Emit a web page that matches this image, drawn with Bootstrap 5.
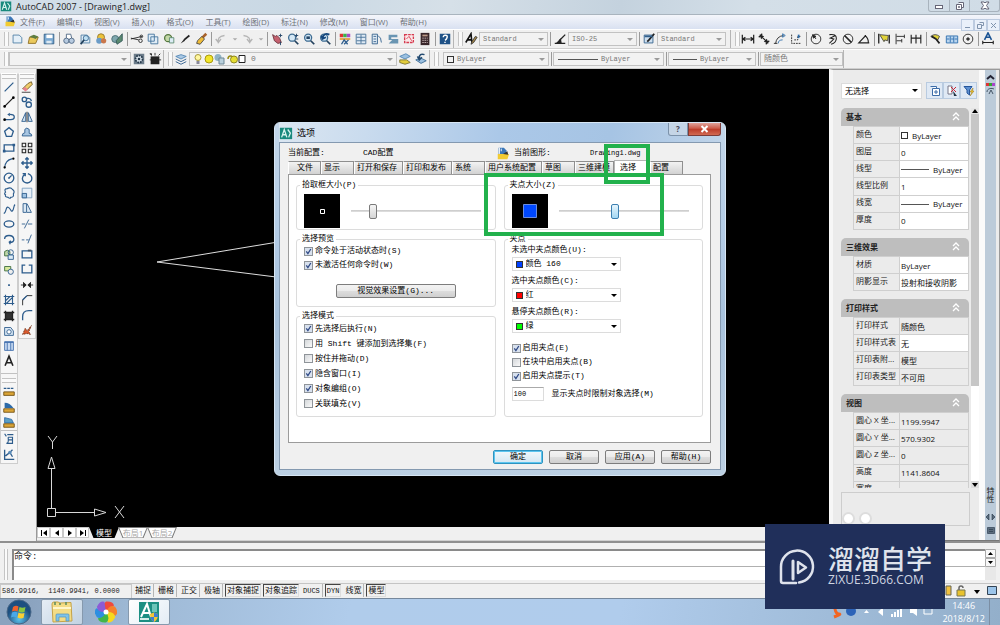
<!DOCTYPE html>
<html lang="zh-CN">
<head>
<meta charset="utf-8">
<meta name="viewport" content="width=device-width, initial-scale=1">
<title>AutoCAD 2007 - [Drawing1.dwg]</title>
<link href="https://cdn.jsdelivr.net/npm/bootstrap@5.3.0/dist/css/bootstrap.min.css" rel="stylesheet">
<style>
:root{--ui:"Open Sans","Noto Sans CJK SC",sans-serif;--mono:"Liberation Mono","Noto Sans CJK SC",monospace}
body{font:9px/12px var(--ui);color:#222;background:#f0f0f0}
button,select,input{font:inherit;color:inherit;line-height:inherit}
button{background:none;border:0;padding:0}
svg{display:block}
.mono8{font:8px/10px var(--mono)}
.mono7{font:7px/10px var(--mono)}

/* window chrome */
.titlebar{height:15px;background:linear-gradient(100deg,#d3dfe9,#c9d8e4 30%,#d6e0e8 45%,#c4d2de 62%,#d4dfe8 75%,#d0dce6);border-bottom:1px solid #a9b4be}
.titlebar h1{font:9px/14px var(--ui);margin:0;color:#222}
.wbtns{border:1px solid #a8b3bd;border-top:0;border-radius:0 0 3px 3px;height:12px}
.wbtns button{width:20px;display:grid;place-items:center}
.wbtns button+button{border-left:1px solid #a8b3bd}
.wbtns button:last-child{width:30px}
.menubar{height:14px;background:linear-gradient(#f4f6fb,#d9e1f1);font-size:8px;line-height:14px}
.menubar nav{gap:12px}
.menubar a{color:#6e7278;text-decoration:none}
.mdi button{width:13px;height:12px;border:1px solid #bccbe0;background:#e9f0fa;display:grid;place-items:center;color:#8094ae}

/* toolbars */
.tb{height:20px;overflow:hidden;background:#f0f0f0;border-top:1px solid #fff;border-bottom:1px solid #cfcfcf}
.bar{border-right:1px solid #b5b5b5;height:18px}
.grip{width:5px;height:14px;border:1px solid #c4c4c4;border-width:0 1px;background:#fafafa}
.ic{width:16px;height:16px;display:grid;place-items:center;flex:none}
.ic.slim{width:10px}
.bar-sep{width:1px;height:14px;background:#9a9a9a;margin:0 1px 0 2px;flex:none}
.combo{position:relative;border:1px solid #c2c2c2;background:#f2f2f2;height:14px;color:#777;flex:none}
.combo select{appearance:none;border:0;background:transparent;padding:0 10px 0 3px;outline:0;min-width:0;height:12px;flex:1}
.combo::after{content:"";position:absolute;right:3px;top:5px;border:3px solid transparent;border-top-color:#9a9a9a;border-bottom:0}
.combo.live{background:#fff;color:#000;border-color:#dcdcdc}
.combo.live::after{border-top-color:#000}
.w-std{width:69px}.w-proj{width:122px}.w-layer{width:208px}.w-color{width:106px}.w-type{width:111px}.w-wt{width:88px}.w-plot{width:83px}
.w-sel{width:81px;height:16px}
.ln{height:1px;background:#555;align-self:center;flex:none}

/* side tool strips */
.strip{width:18px;background:#f6f6f6;border:1px solid #cdcdcd;border-top-color:#fff}
.strip .ic{height:auto;flex:1 1 0;width:16px}
.hgrip{height:5px;width:14px;margin:0 1px;border:1px solid #c4c4c4;border-width:1px 0;background:#fafafa}
.draw{height:290px}.modify{height:259px}.order{height:47px}.ucs{height:32px}
.sheetarea{border-left:1px solid #999}
.board{background:#000;min-width:0}
.ucsicon{position:absolute;left:0;bottom:0}
.tabsrow{height:14px;border-bottom:1px solid #d0d0d0;font-size:8px;line-height:11px}
.tabsrow .nav1{width:13px;height:11px;background:#fff;border:1px solid #c9c9c9;display:grid;place-items:center}
.sheet{width:30px;height:11px;margin-right:-1px;color:#a8a8a8;background:#777;clip-path:polygon(0 0,100% 0,85% 100%,15% 100%)}
.sheet span{display:block;height:10px;line-height:10px;background:#fff;clip-path:polygon(4% 0,96% 0,82% 100%,18% 100%)}
.sheet.on{color:#fff;background:#000}.sheet.on span{background:#000}

/* properties palette */
.palette{width:171px;border:1px solid #9a9a9a;border-left:4px solid #f7f7f7;background:#ebebeb;border-bottom-color:#777;font-size:8px}
.pal-in{width:146px;padding:12px 0 0 8px}
.pal-btn{width:17px;height:17px;border:1px solid #b9cbe0;background:#dfe9f5;display:grid;place-items:center}
.props{height:380px;overflow:hidden;margin-top:9px}
.sec{width:128px;margin-bottom:8px}
.sec h2{font:bold 8px/17px var(--ui);height:18px;margin:0;padding:0 5px;background:#bebebe;border-radius:5px 5px 0 0}
.sec table{width:116px;margin-left:12px;table-layout:fixed;border-collapse:collapse;font-size:8px;line-height:12px}
.sec th,.sec td{border:1px solid #cfcfcf;padding:1px 1px 0;white-space:nowrap;overflow:hidden;font-weight:400;color:#222}
.sec th{width:46px;padding:0 0 3px 2px}
.sec td{background:#fff;color:#111}
.sec td.ro{background:#ebebeb}
.r6{height:104px}.r2{height:35px}.r4{height:69px}.r5{height:87px}
.vbar{width:8px;background:#fff}
.thumb{height:272px;background:#c6c6c6}
.desc{width:129px;height:34px;border:1px solid #cdcdcd;margin-top:4px;overflow:hidden}
.bubble{width:13px;height:13px;border:2px solid #ddd;border-radius:50%;background:#fff}
.rail{width:11px;background:#bccbd9;margin-right:3px}
.rail b{writing-mode:vertical-rl;font:8px/11px var(--ui)}
.edge{background:#fafafa}

/* command line, status, taskbar */
.cmd{height:42px;border-top:2px solid #8f8f8f;padding:6px 4px 3px 4px}
.cmd .grip{width:4px}
.cmdbox{border:1px solid #8a8a8a;border-width:2px 0 0 2px;background:#fff;font:9px/12px var(--mono)}
.cmdbox input{border:0;border-top:1px solid #b0b0b0;outline:0;height:14px;width:100%;padding:0}
.cmdbox p{height:15px;margin:0}
.status{height:15px;border-top:1px solid #c4c4c4;background:#f0f0f0}
.coord{width:132px;border:1px solid #c9c9c9;padding-left:1px;line-height:13px;white-space:pre}
.tog{border-right:1px solid #b5b5b5;height:13px;padding:0 2px;margin:0 1px;color:#111;line-height:12px}
.tog.on{border:1px solid #444;border-right-color:#ddd;border-bottom-color:#ddd;padding:0 1px}
.taskbar{height:27px;background:linear-gradient(100deg,#8ba3bf,#8ba3bf 3%,#9db8d4 13%,#b0cceb 35%,#b0ccec 62%,#a6c2e0 75%,#93afca);border-top:1px solid #76889c}
.task{width:42px;height:26px;border:1px solid #8699ad;border-radius:2px;background:linear-gradient(135deg,#e5edf5,#c2d2e2);display:grid;place-items:center}
.task.act{background:linear-gradient(135deg,#fff,#e3ecf5)}
.plain{width:37px;height:26px;display:grid;place-items:center}
.clock{color:#fff;text-align:center;font:9px/13px var(--ui)}
.peek{width:11px;border-left:1px solid #7b8ea3}

/* options dialog */
.dlg{position:absolute;left:50%;top:122px;width:452px;transform:translateX(-50%);border:1px solid #d7e6f4;border-radius:6px;background:linear-gradient(#c3d6e9,#b3cce6 30%,#a7c1dc 55%,#bcd0e3);padding:0 4px 5px;color:#000}
.dlg-title{height:19px;font-size:9px;background:linear-gradient(100deg,#dbe6f1,#c9dbee 20%,#abc8e8 50%,#a6c4e4 75%,#bfd3e8)}
.dlg-title button{height:13px;display:grid;place-items:center;border:1px solid #7c92aa;border-top:0;font:bold 8px/10px var(--ui);background:#c5d5e6;color:#445}
.dlg-title .q{width:20px;border-radius:0 0 0 3px}
.dlg-title .x{width:33px;background:linear-gradient(#dfa199,#cb5a49 45%,#bb3a28 50%,#d26a52);color:#fff;border-color:#7d3c38;border-radius:0 0 3px 0}
.dlg-body{border:1px solid #8499b0;background:#f0f0f0;padding:0 9px 5px 8px}
.info{height:18px;padding-top:1px}
.i1{width:75px}.i2{width:133px}.i3{width:121px}
.dtabs button{height:13px;border:1px solid #8f8f8f;border-bottom:0;border-left-color:#fff;background:linear-gradient(#f3f3f3,#d2d2d2);white-space:nowrap;text-align:left;padding:0 0 0 2px;width:33px;overflow:hidden}
.dtabs .t5{width:49px}.dtabs .t6{width:57px}.dtabs .t4{width:39px}
.dtabs button.on{background:#fff;height:15px;margin:-1px 0 -1px;position:relative;width:36px;padding-left:5px;border-color:#b5b5b5}
.panel{border:1px solid #9b9b9b;background:#fff;height:269px;padding:5px 7px 0}
.box{border:1px solid #dcdcdc;border-radius:3px;padding:0 7px;margin:0;min-width:0}
.box legend{float:none;width:auto;font:8px/10px var(--mono);padding:0 2px;margin:0 0 0 -4px}
.h1r{height:50px}.h2l{height:73px}.h2r{height:183px}
.prev{width:36px;height:34px;background:#000;display:grid;place-items:center}
.slide{appearance:none;width:130px;height:16px;background:linear-gradient(#c8c8c8,#e2e2e2) center/100% 2px no-repeat;margin:0 0 0 11px}
.slide::-webkit-slider-thumb{appearance:none;width:8px;height:15px;border:1px solid #7a7a7a;border-radius:2px;background:linear-gradient(#f5f5f5,#d5d5d5)}
.slide.blue::-webkit-slider-thumb{border-color:#3c7fb1;background:linear-gradient(#e6f5fd,#a3d7f3)}
.chk{display:flex;align-items:center;gap:2px;height:15px}
.chk.low{height:14px}
.chk input{appearance:none;width:9px;height:9px;margin:0;border:1px solid #8f9499;background:linear-gradient(135deg,#d4d7da,#fafafa);flex:none}
.chk input:checked{background:url("data:image/svg+xml,%3Csvg xmlns='http://www.w3.org/2000/svg' viewBox='0 0 7 7'%3E%3Cpath d='M1.3 3.4 2.9 5.6 5.8 1' fill='none' stroke='%23304a86' stroke-width='1.3'/%3E%3C/svg%3E") #d8e1ee}
.pb{border:1px solid #7d7d7d;border-radius:2px;background:linear-gradient(#f3f3f3,#ebebeb 48%,#dddddd 52%,#cfcfcf);height:14px;width:50px;line-height:12px}
.pb.wide{width:120px}
.pb.def{border:1px solid #2e93c0;box-shadow:inset 0 0 0 1px #5cc5ef;background:linear-gradient(#f0f8fc,#d5e7f2)}
.acts{gap:6px;margin-top:7px}
.lab{height:13px;line-height:12px;display:block}
.w-grip{width:109px}
.sw{width:7px;height:7px;border:1px solid #333;margin-left:3px;align-self:center;flex:none}
.sw.blue{background:#0040ff}.sw.red{background:#f00}.sw.green{background:#0f0}
.num{width:32px;height:14px;border:1px solid #dcdcdc;padding:0 1px;border-top-color:#aaa}
.hl{position:absolute;border:4px solid #22b14c}
.hl.a{left:329px;top:21px;width:46px;height:40px}
.hl.b{left:209px;top:50px;width:180px;height:63px}

/* site mark over the corner */
.sitemark{position:absolute;right:55px;bottom:16px;width:180px;height:85px;background:#202f5a;color:#dfe3ec;padding-left:14px}
.sitemark strong{font:500 26px/28px "Noto Sans CJK SC",sans-serif;margin-top:-4px}
.sitemark small{font:12px/12px "Open Sans",sans-serif;color:#cfd5e2;margin-top:2px}
</style>
</head>
<body class="d-flex flex-column vh-100 overflow-hidden position-relative">

<header>
  <div class="titlebar d-flex align-items-start">
    <span class="ms-0 me-1" data-art="cad"></span>
    <h1 class="flex-grow-1">AutoCAD 2007 - [Drawing1.dwg]</h1>
    <div class="wbtns d-flex me-0">
      <button aria-label="最小化"><svg width="10" height="8"><rect x="1.500" y="3.500" width="7" height="3" fill="#fff" stroke="#667"/></svg></button>
      <button aria-label="还原"><svg width="10" height="10"><path d="M3.500 1.500h5v5h-2M1.500 3.500h5v5h-5zM3.500 5.500h1v1h-1z" fill="#fff" stroke="#667"/></svg></button>
      <button aria-label="关闭"><svg width="10" height="9"><path d="M1 1h3l1 1 1-1h3L6.500 4.500 9 8H6L5 7 4 8H1l2.500-3.500z" fill="#fff" stroke="#667"/></svg></button>
    </div>
  </div>
  <div class="menubar d-flex">
    <span class="ms-1 me-1" data-art="dwg"></span>
    <nav class="d-flex flex-grow-1">
      <a href="#">文件(F)</a><a href="#">编辑(E)</a><a href="#">视图(V)</a><a href="#">插入(I)</a><a href="#">格式(O)</a><a href="#">工具(T)</a><a href="#">绘图(D)</a><a href="#">标注(N)</a><a href="#">修改(M)</a><a href="#">窗口(W)</a><a href="#">帮助(H)</a>
    </nav>
    <div class="mdi d-flex pt-1">
      <button aria-label="最小化文档"><svg width="7" height="7"><path d="M1 5.500h5" stroke="currentColor"/></svg></button>
      <button aria-label="还原文档"><svg width="7" height="7"><path d="M2.500.5h4v3h-2M.5 2.500h4v4h-4z" fill="none" stroke="currentColor"/></svg></button>
      <button aria-label="关闭文档"><svg width="7" height="7"><path d="M1 1l5 5M6 1 1 6" stroke="currentColor"/></svg></button>
    </div>
  </div>

  <div class="tb d-flex align-items-center">
    <div class="bar d-flex align-items-center ps-1 flex-shrink-0">
      <span class="grip me-0"></span>
      <span class="d-flex" data-icons="new open save | plot preview publish dwf | cut copy paste brush match | undo -down redo -down | pan zoomrt zoomwin zoomprev | props dc palettes sheets markup calc | help"></span>
    </div>
    <div class="bar d-flex align-items-center ps-1 flex-shrink-0 mono7">
      <span class="grip me-0"></span>
      <span class="d-flex" data-icons="tstyle"></span>
      <div class="combo w-std d-flex"><select aria-label="文字样式"><option>Standard</option></select></div>
      <span class="bar-sep"></span>
      <span class="d-flex" data-icons="dstyle"></span>
      <div class="combo w-std d-flex"><select aria-label="标注样式"><option>ISO-25</option></select></div>
      <span class="bar-sep"></span>
      <span class="d-flex" data-icons="tbstyle"></span>
      <div class="combo w-std d-flex me-1"><select aria-label="表格样式"><option>Standard</option></select></div>
    </div>
    <div class="d-flex align-items-center ps-1 flex-shrink-0">
      <span class="grip"></span>
      <span class="d-flex" data-icons="dlin dali darc dord | drad djog ddia dang | dq dbase dcont | dlead dtol dcen | dedit"></span>
    </div>
  </div>

  <div class="tb d-flex align-items-center">
    <div class="bar d-flex align-items-center ps-1 flex-shrink-0">
      <span class="grip"></span>
      <div class="combo w-proj d-flex"><select aria-label="工作空间"><option></option></select></div>
      <span class="d-flex" data-icons="gear wsave"></span>
    </div>
    <div class="bar d-flex align-items-center ps-1 flex-shrink-0">
      <span class="grip"></span>
      <span class="d-flex" data-icons="layers"></span>
      <div class="combo w-layer d-flex align-items-center mono8">
        <svg width="58" height="12" viewBox="0 0 58 12"><circle cx="8" cy="4.500" r="3" fill="#fff7a0" stroke="#a99a3c"/><path d="M6.500 8h3v3h-3z" fill="#889"/><circle cx="19" cy="6" r="4" fill="#f2e529" stroke="#a99a10"/><circle cx="28" cy="4.500" r="3.500" fill="#8fb3c4"/><path d="M29 5h5v6h-5z" fill="#b9d0dc" stroke="#6d8796"/><path d="M38 6a2.500 3 0 0 1 5 0" fill="none" stroke="#998c15" stroke-width="1.500"/><circle cx="44" cy="6.500" r="3.500" fill="#e5dd32" stroke="#8e8620"/><path d="M49 2.500h6v7h-6z" fill="#fff" stroke="#222"/></svg>
        <select aria-label="图层"><option>0</option></select>
      </div>
      <span class="d-flex" data-icons="lcur lprev"></span>
    </div>
    <div class="bar d-flex align-items-center ps-1 flex-shrink-0 mono7">
      <span class="grip me-1"></span>
      <div class="combo w-color d-flex"><span class="sw"></span><select aria-label="颜色"><option>ByLayer</option></select></div>
      <span class="bar-sep"></span>
      <div class="combo w-type d-flex ps-1"><span class="ln" style="width:40px"></span><select aria-label="线型"><option>ByLayer</option></select></div>
      <span class="bar-sep"></span>
      <div class="combo w-wt d-flex ps-1"><span class="ln" style="width:24px"></span><select aria-label="线宽"><option>ByLayer</option></select></div>
      <span class="bar-sep"></span>
      <div class="combo w-plot d-flex mono8"><select aria-label="打印样式"><option>随颜色</option></select></div>
    </div>
  </div>
</header>

<main class="d-flex flex-grow-1" style="min-height:0">
  <aside class="d-flex align-items-start pt-1">
    <div class="strip d-flex flex-column align-items-start">
      <span class="hgrip"></span>
      <div class="draw d-flex flex-column" data-icons="line xline pline poly rect arc circle cloud spline ellipse earc insert block point hatch grad region table mtext"></div>
      <hr class="my-1 w-100"><span class="hgrip"></span>
      <div class="order d-flex flex-column" data-icons="dist area mass"></div>
      <hr class="my-0 w-100">
      <div class="ucs d-flex flex-column" data-icons="list locate"></div>
    </div>
    <div class="strip d-flex flex-column me-0">
      <span class="hgrip"></span>
      <div class="modify d-flex flex-column" data-icons="erase copyobj mirror offset array move rotate scale stretch trim extend brk1 brk join chamfer fillet explode"></div>
    </div>
  </aside>

  <section class="sheetarea d-flex flex-column flex-grow-1" style="min-width:0">
    <div class="board flex-grow-1 position-relative mt-0">
      <svg width="100%" height="100%" fill="none" stroke="#ddd"><path d="M247 172 120 193l127 16"/></svg>
      <svg class="ucsicon" width="100" height="100" fill="none" stroke="#d8d8d8"><path d="M10.500 81.500h8v8h-8zM14.500 81V41M11 41.500h7L14.500 30zM19 85.500h38M57.500 82v7L69 85.500z"/><path d="M11 9l4.500 6L20 9M15.500 15v7M78 79l9 12M87 79l-9 12"/></svg>
    </div>
    <div class="tabsrow d-flex align-items-start">
      <button class="nav1" aria-label="第一个"><svg width="8" height="8"><path d="M1 1h1v6H1zM7 1v6L3 4z"/></svg></button>
      <button class="nav1" aria-label="上一个"><svg width="8" height="8"><path d="M6 1v6L2 4z"/></svg></button>
      <button class="nav1" aria-label="下一个"><svg width="8" height="8"><path d="M2 1v6l4-3z"/></svg></button>
      <button class="nav1" aria-label="最后一个"><svg width="8" height="8"><path d="M6 1h1v6H6zM1 1v6l4-3z"/></svg></button>
      <button class="sheet on"><span>模型</span></button><button class="sheet"><span>布局1</span></button><button class="sheet"><span>布局2</span></button>
    </div>
  </section>

  <aside class="palette d-flex flex-shrink-0">
    <div class="pal-in">
      <div class="d-flex align-items-center">
        <div class="combo live w-sel d-flex me-1"><select aria-label="选择集" class="h-100"><option>无选择</option></select></div>
        <button class="pal-btn" aria-label="切换"><svg width="12" height="12"><path d="M1.500 1.500h6v2M3.500 3.500h7v7h-7zM7 5v4M5 7h4" fill="#fff" stroke="#3d6da8"/></svg></button>
        <button class="pal-btn" aria-label="选择对象"><svg width="12" height="12"><path d="M2 1h4v8H2z" fill="#fff" stroke="#778"/><path d="M5 2l5 5M10 2 5 7" stroke="#c23"/><path d="M7 6l4 5H8z" fill="#234"/></svg></button>
        <button class="pal-btn" aria-label="快速选择"><svg width="12" height="12"><path d="M1 1.500h8L6.500 5v5L4 8V5z" fill="#5c8fd0" stroke="#24559b"/><path d="M10 3 7 7h2l-2 4 4-5H9.500z" fill="#f0c52a" stroke="#97751a" stroke-width=".5"/></svg></button>
      </div>
      <div class="d-flex props justify-content-between">
        <div>
          <div class="sec"><h2 class="d-flex justify-content-between"><span>基本</span><span data-art="fold"></span></h2>
            <table class="r6">
              <tr><th>颜色</th><td><span class="d-flex"><i class="sw me-1 ms-0"></i>ByLayer</span></td></tr>
              <tr><th>图层</th><td>0</td></tr>
              <tr><th>线型</th><td><span class="d-flex"><i class="ln me-1" style="width:28px"></i>ByLayer</span></td></tr>
              <tr><th>线型比例</th><td>1</td></tr>
              <tr><th>线宽</th><td><span class="d-flex"><i class="ln me-1" style="width:28px"></i>ByLayer</span></td></tr>
              <tr><th>厚度</th><td>0</td></tr>
            </table></div>
          <div class="sec"><h2 class="d-flex justify-content-between"><span>三维效果</span><span data-art="fold"></span></h2>
            <table class="r2">
              <tr><th>材质</th><td>ByLayer</td></tr>
              <tr><th>阴影显示</th><td>投射和接收阴影</td></tr>
            </table></div>
          <div class="sec"><h2 class="d-flex justify-content-between"><span>打印样式</span><span data-art="fold"></span></h2>
            <table class="r4">
              <tr><th>打印样式</th><td class="ro">随颜色</td></tr>
              <tr><th>打印样式表</th><td>无</td></tr>
              <tr><th>打印表附...</th><td class="ro">模型</td></tr>
              <tr><th>打印表类型</th><td class="ro">不可用</td></tr>
            </table></div>
          <div class="sec"><h2 class="d-flex justify-content-between"><span>视图</span><span data-art="fold"></span></h2>
            <table class="r5">
              <tr><th>圆心 X 坐...</th><td class="ro">1199.9947</td></tr>
              <tr><th>圆心 Y 坐...</th><td class="ro">570.9302</td></tr>
              <tr><th>圆心 Z 坐...</th><td class="ro">0</td></tr>
              <tr><th>高度</th><td class="ro">1141.8604</td></tr>
              <tr><th>宽度</th><td class="ro">2399.9993</td></tr>
            </table></div>
        </div>
        <div class="vbar d-flex flex-column">
          <svg width="8" height="6"><rect width="8" height="6" fill="#e6e6e6"/><path d="M1 5h6L4 1z"/></svg>
          <div class="thumb"></div>
          <svg class="mt-auto" width="8" height="7"><rect width="8" height="7" fill="#ddd"/><path d="M1 2h6L4 6z"/></svg>
        </div>
      </div>
      <div class="desc d-flex align-items-end gap-1 pt-4"><i class="bubble"></i><i class="bubble"></i></div>
    </div>
    <div class="edge flex-grow-1"></div>
    <div class="rail d-flex flex-column align-items-center">
      <svg width="11" height="24" class="mt-1"><path d="M2 5l3.500-3L9 5" stroke="#223" fill="none" stroke-width="2"/><path d="M1 9h3v3H1z" fill="#d33"/><path d="M4 9h3v3H4z" fill="#3a3"/><path d="M7 9h3v3H7z" fill="#a4c"/><path d="M2 18c0-4 5-4 7-3M4 20l2-4 2 4" stroke="#456" fill="none"/></svg>
      <b class="mt-auto">特性</b>
      <svg width="11" height="37"><path d="M1 14l3-3v6zM10 14l-3-3v6zM2.500 24.500h7v6h-7z M4 26.500h4M4 28.500h4" fill="#345" fill-opacity=".7" stroke="#234" stroke-width=".6"/></svg>
    </div>
  </aside>
</main>

<section class="cmd d-flex">
  <span class="grip me-1 h-100"></span>
  <div class="cmdbox flex-grow-1 ms-0">
    <p>命令:</p>
    <input aria-label="命令行">
  </div>
  <svg width="11" height="31"><path d="M0 0h11v31H0z" fill="#e8e8e8"/><path d="M.5.5h10v8H.5z M.5 9.500h10v8H.5z" fill="#f8f8f8" stroke="#aaa"/><path d="M3 6h5L5.500 3zM3 12h5l-2.500 3z"/></svg>
</section>

<section class="status d-flex align-items-start mono8">
  <span class="coord mono7">586.9916,  1140.9941, 0.0000</span>
  <button class="tog">捕捉</button><button class="tog">栅格</button><button class="tog">正交</button><button class="tog">极轴</button><button class="tog on">对象捕捉</button><button class="tog on">对象追踪</button><button class="tog mono7">DUCS</button><button class="tog on mono7">DYN</button><button class="tog">线宽</button><button class="tog on">模型</button>
  <svg class="ms-auto" width="56" height="14"><path d="M2 2h5v9H2z" fill="#f0c040" stroke="#665"/><path d="M13 6h8v6h-8z" fill="#e8c22e" stroke="#775"/><path d="M15 6V4a2 2 0 0 1 4 0" fill="none" stroke="#666" stroke-width="1.500"/><path d="M30 6h6l-3 4z"/><path d="M43.500 2.500h9v8h-9z" fill="#9cc5ea" stroke="#345"/></svg>
</section>

<footer class="taskbar d-flex align-items-center">
  <button class="plain" aria-label="开始"><svg width="26" height="26" viewBox="0 0 26 26"><defs><radialGradient id="orb" cy=".8"><stop stop-color="#5cc3ec"/><stop offset="1" stop-color="#1d4f80"/></radialGradient></defs><circle cx="13" cy="13" r="12" fill="url(#orb)" stroke="#4a6787"/><path d="M7 8q3-2 5.500-.5l-1 5Q9 11 6 12.500z" fill="#f0622c"/><path d="M13.500 8q3 1.500 6 0l-1 5q-3 1-6-.5z" fill="#8cc63e"/><path d="M6 13.500q3-1.500 5.500 0l-1 5Q8 17 5 18.500z" fill="#4aa8e8"/><path d="M12.500 13.500q3 1.500 6 .5l-1 5q-3 1-6-.5z" fill="#fbd033"/></svg></button>
  <button class="task ms-1" aria-label="资源管理器"><svg width="24" height="22"><path d="M2 3q0-2 2-2h4l2 1 11-.5 1 18.500-19 1z" fill="#f3dc86" stroke="#c5a348"/><path d="M5 1v3M10 2v2M16 1v3" stroke="#5a8a5c" stroke-width="1.500"/><path d="M3 7h18" stroke="#fff6cc" stroke-width="2"/><path d="M6 20v-6q0-1 1-1h11q1 0 1 1v6h-3v-4H9v4z" fill="#7ec3ea" stroke="#5192bc" stroke-width=".7"/></svg></button>
  <button class="plain mx-1" aria-label="浏览器"><svg width="22" height="22" viewBox="-11 -11 22 22"><path d="M0 0Q-5-7 0-10.500 7-11 8-6.500z" fill="#f04a3c" id="petal"/><path d="M0 0Q-5-7 0-10.500 7-11 8-6.500z" fill="#f5822c" transform="rotate(60)"/><path d="M0 0Q-5-7 0-10.500 7-11 8-6.500z" fill="#f6d91f" transform="rotate(120)"/><path d="M0 0Q-5-7 0-10.500 7-11 8-6.500z" fill="#42b649" transform="rotate(180)"/><path d="M0 0Q-5-7 0-10.500 7-11 8-6.500z" fill="#2d8fe0" transform="rotate(240)"/><path d="M0 0Q-5-7 0-10.500 7-11 8-6.500z" fill="#8b5bd6" transform="rotate(300)"/><circle r="2.500" fill="#fff"/></svg></button>
  <button class="task act" aria-label="AutoCAD"><svg width="22" height="20"><path d="M1 0h20v20H1z" fill="#1c8f83"/><path d="M3 15 9 2l4 13M5 11h6" fill="none" stroke="#fff" stroke-width="2"/><path d="M14 2h5v8h-5z" fill="#6dc5b9"/><path d="M2 17h9" stroke="#d5eee9" stroke-width="2"/><path d="M12 12l4-1.500 4 1.500q0 6-4 8-4-2-4-8z" fill="#f3c437"/><path d="M16 10.500 20 12v3h-4zM12 15h4v5q-3-1.500-4-5z" fill="#3d7fd0"/></svg></button>
  <div class="ms-auto d-flex align-items-center h-100">
    <svg class="me-0" width="110" height="16"><path d="M9 2Q2 0 3 5t4 5-5 3" fill="none" stroke="#f26522" stroke-width="3"/><circle cx="19" cy="7" r="5" fill="#2c63b8"/><path d="M32 9h5l-2.500-3zM46 8l5-5v9z" fill="#fff"/><path d="M60 13V10M63 13V8M66 13V6M69 13V4" stroke="#fff" stroke-width="2"/><path d="M78 5h3l4-3v10l-4-3h-3z" fill="#fff"/><path d="M92 4h8v6h-8z" fill="none" stroke="#fff"/></svg>
    <div class="clock me-1"><div>14:46</div><div>2018/8/12</div></div>
    <span class="peek h-100"></span>
  </div>
</footer>

<section class="dlg" role="dialog" aria-label="选项">
  <div class="dlg-title d-flex align-items-center">
    <span class="ms-0 me-1" data-art="cad"></span><span class="flex-grow-1">选项</span>
    <div class="d-flex align-self-start"><button class="q" aria-label="帮助">?</button><button class="x" aria-label="关闭"><svg width="9" height="8"><path d="M1.500 1l6 6M7.500 1l-6 6" stroke="#fff" stroke-width="2"/></svg></button></div>
  </div>
  <div class="dlg-body mono8">
    <div class="info d-flex align-items-center">
      <span class="i1">当前配置:</span><span class="i2">CAD配置</span>
      <span class="me-1" data-art="dwg"></span><span class="flex-grow-1">当前图形:</span><span class="i3 mono7">Drawing1.dwg</span>
    </div>
    <div class="dtabs d-flex align-items-start ms-0">
      <button class="ps-2">文件</button><button>显示</button><button class="t5">打开和保存</button><button class="t5">打印和发布</button><button>系统</button><button class="t6">用户系统配置</button><button>草图</button><button class="t4">三维建模</button><button class="on">选择</button><button>配置</button>
    </div>
    <div class="panel">
      <div class="d-flex gap-2 align-items-stretch">
        <div class="d-flex flex-column w-50">
          <fieldset class="box h1r"><legend>拾取框大小(P)</legend>
            <div class="d-flex align-items-center pt-1"><span class="prev"><svg width="5" height="5"><path d="M.5.5h4v4h-4z" fill="none" stroke="#fff"/></svg></span><input class="slide" type="range" min="0" max="100" value="15" aria-label="拾取框大小"></div></fieldset>
          <fieldset class="box mt-1 h2l"><legend>选择预览</legend>
            <label class="chk low"><input type="checkbox" checked>命令处于活动状态时(S)</label>
            <label class="chk low"><input type="checkbox" checked>未激活任何命令时(W)</label>
            <div class="text-center mt-2 pt-1"><button class="pb wide">视觉效果设置(G)...</button></div></fieldset>
          <fieldset class="box mt-1 flex-grow-1"><legend>选择模式</legend>
            <label class="chk"><input type="checkbox" checked>先选择后执行(N)</label>
            <label class="chk"><input type="checkbox">用 Shift 键添加到选择集(F)</label>
            <label class="chk"><input type="checkbox">按住并拖动(D)</label>
            <label class="chk"><input type="checkbox" checked>隐含窗口(I)</label>
            <label class="chk"><input type="checkbox" checked>对象编组(O)</label>
            <label class="chk"><input type="checkbox">关联填充(V)</label></fieldset>
        </div>
        <div class="d-flex flex-column w-50">
          <fieldset class="box h1r"><legend>夹点大小(Z)</legend>
            <div class="d-flex align-items-center pt-1"><span class="prev"><svg width="14" height="14"><path d="M.5.5h13v13H.5z" fill="#0048ff" stroke="#6a8de0"/></svg></span><input class="slide blue" type="range" min="0" max="100" value="43" aria-label="夹点大小"></div></fieldset>
          <fieldset class="box mt-1 h2r"><legend>夹点</legend>
            <label class="lab" for="g1">未选中夹点颜色(U):</label>
            <div class="combo live w-grip d-flex"><span class="sw blue"></span><select id="g1"><option>颜色 160</option></select></div>
            <label class="lab mt-1" for="g2">选中夹点颜色(C):</label>
            <div class="combo live w-grip d-flex"><span class="sw red"></span><select id="g2"><option>红</option></select></div>
            <label class="lab mt-1" for="g3">悬停夹点颜色(R):</label>
            <div class="combo live w-grip d-flex mb-1"><span class="sw green"></span><select id="g3"><option>绿</option></select></div>
            <label class="chk low mt-2"><input type="checkbox" checked>启用夹点(E)</label>
            <label class="chk low"><input type="checkbox">在块中启用夹点(B)</label>
            <label class="chk low"><input type="checkbox" checked>启用夹点提示(T)</label>
            <div class="d-flex align-items-center gap-2 mt-1"><input class="num mono7" id="lim" value="100"><label for="lim">显示夹点时限制对象选择(M)</label></div></fieldset>
        </div>
      </div>
    </div>
    <div class="acts d-flex justify-content-end"><button class="pb def">确定</button><button class="pb">取消</button><button class="pb">应用(A)</button><button class="pb">帮助(H)</button></div>
  </div>
  <span class="hl a"></span><span class="hl b"></span>
</section>

<div class="sitemark d-flex align-items-center">
  <svg width="37" height="38" viewBox="0 0 37 38" fill="none" stroke="#dfe3ec" stroke-width="2.500" stroke-linecap="round" stroke-linejoin="round"><path d="M17 35H4Q2 35 2 33V19A16 16 0 1 1 20 34.500"/><path d="M14 13v18" stroke-width="3"/><path d="M19 14v11l8-5.500z"/></svg>
  <div class="d-flex flex-column ms-2 ps-1"><strong>溜溜自学</strong><small>ZIXUE.3D66.COM</small></div>
</div>

<script>
// Icon drawings on a 16-unit grid; k = dark stroke, b = blue stroke, t = thick blue stroke
const k='fill="none" stroke="#222"', b='fill="none" stroke="#2d5c8c"', t='fill="none" stroke="#2d5c8c" stroke-width="1.500"';
const page='<path d="M3.500 3.500h7l3 3v6h-10z" fill="#e4eff8" stroke="#4f7fa5"/>';
const lens='<circle cx="7" cy="6.500" r="4" fill="#d5e8f5" stroke="#3e6c92" stroke-width="1.500"/><path d="M10 10l4 4" stroke="#24425e" stroke-width="2"/>';
const art={
cad:'<path d="M1 2h14v13H1z" fill="#19897d"/><path d="M3 13 6 4l3 9M4 10h4M10 4l3 4-2 5" fill="none" stroke="#d8f2ee" stroke-width="1.500"/>',
dwg:'<path d="M3 2h6l3 3v6H3z" fill="#3c77b8"/><path d="M4 2v7M6 3v3" stroke="#fff"/><path d="M2 9h13l-2 6H2z" fill="#f1cb33"/><path d="M8 9l5-3 1 4z" fill="#333"/>',
fold:'<path d="M5 8l3-3 3 3M5 12l3-3 3 3" fill="none" stroke="#fff" stroke-width="1.300"/>',
new:page,open:'<path d="M2.500 13 4 6h10l-3 7z" fill="#eac95c" stroke="#8c6d23"/><path d="M4 5 9 3l5 2-3 3z" fill="#5e7d3f"/>',
save:'<path d="M2.500 2.500h11v11h-11z" fill="#7aa9d2" stroke="#2f5b85"/><path d="M5 3h7v4H5z" fill="#fff"/><path d="M5 10h6v3H5z" fill="#dce8f2"/>',
plot:'<path d="M5 7V2.500h5L11 7" fill="#fff" stroke="#4a6480"/><circle cx="5" cy="10" r="3" fill="#b8cbe0" stroke="#4a6480"/><circle cx="11" cy="10" r="3" fill="#b8cbe0" stroke="#4a6480"/>',
preview:page+'<circle cx="9" cy="7" r="3" fill="#bfe0f3" stroke="#3e6c92"/><path d="M7 9l-4 5" stroke="#24425e" stroke-width="2"/>',
publish:'<circle cx="8" cy="6" r="4" fill="#edc43a" stroke="#91742a"/><circle cx="6" cy="10" r="3.500" fill="#6b9cc7"/><circle cx="11" cy="10" r="3" fill="#ca784c"/>',
dwf:'<circle cx="6" cy="8" r="4" fill="#7fa7ad" stroke="#45696f"/><path d="M14 2v8l-6 4-1-4z" fill="#5b8a70" stroke="#35585a"/>',
cut:'<path d="M1 8l13-3M1 7l9 2" '+k+'/><circle cx="12" cy="10" r="2" '+k+'/><circle cx="13" cy="5" r="1.500" '+k+'/>',
copy:'<path d="M2.500 2.500h7v8h-7zM5.500 5.500h8v8h-8z" fill="#e0edf7" stroke="#41719a"/>',
paste:'<circle cx="7" cy="7" r="4" fill="#c5d9a8" stroke="#55773d" stroke-width="1.500"/><path d="M8.500 6.500h5v6h-5z" fill="#dcecf5" stroke="#5b8a6e"/>',
brush:'<path d="M13 4 7 9" stroke="#222" stroke-width="2"/><path d="M7 8 3 13l5-3z" fill="#222"/>',
match:'<path d="M14 2 9 7" stroke="#a8612a" stroke-width="3"/><path d="M9 5l3 3-5 6-4-1 1-3z" fill="#f0bc38" stroke="#444"/>',
undo:'<path d="M5 13Q3 5 12 4M2 8l3 4 3-4" fill="none" stroke="#b5b5b5" stroke-width="1.500"/>',
redo:'<path d="M11 13Q13 5 4 4M8 8l3 4 3-4" fill="none" stroke="#b5b5b5" stroke-width="1.500"/>',
down:'<path d="M5 7h6l-3 3z" fill="#aaa"/>',
pan:'<path d="M3 3l3 2 2-1 3 3 2 5-4 1-4-3z" fill="#c4606e" stroke="#69323c"/><path d="M12 2v4M10 4h4M12 11v4" stroke="#246"/>',
zoomrt:lens+'<path d="M12 2v4M10 4h4M11 8h3" stroke="#246"/>',zoomwin:lens+'<path d="M5 5h4v3H5z" fill="#246"/>',
zoomprev:lens+'<path d="M13 3q-6-3-8 4M4 4l1 4 4-2" fill="none" stroke="#14467c" stroke-width="2"/>',
props:'<path d="M2 2h4v4H2z" fill="#d33"/><path d="M6 2h4v4H6z" fill="#39b54a"/><path d="M10 2h4v4h-4z" fill="#a44bc9"/><path d="M2 7h12v2H2z" fill="#e3a03a"/><path d="M4 14l3-5 4 5M12 9l-5 5" '+b+' stroke-width="1.500"/>',
dc:'<path d="M2.500 2.500h11v11h-11zM8 3v10M3 6h10M3 10h10" fill="#dfeaf4" stroke="#446e95"/>',
palettes:'<path d="M2.500 2.500h6v11h-6zM9 4q4 2 4 8M4 5h3M4 8h3M4 11h3" fill="#dfeaf4" stroke="#33608c"/>',
sheets:'<path d="M3 3h10v3H6v2h8v5H3l4-4H3z" fill="#6a95b2"/>',
markup:'<path d="M3 3h10v9H3z" fill="#fbe8e8" stroke="#d63c50" stroke-dasharray="3 1" stroke-width="1.500"/><path d="M5 8l3-3 3 5" fill="none" stroke="#d63c50"/>',
calc:'<path d="M3 1h10v14H3z" fill="#39262a"/><path d="M5 3h6v2H5z" fill="#b98"/><path d="M5 7h6M5 9.500h6M5 12h6" stroke="#e6d4d4" stroke-dasharray="1.500 1"/>',
help:'<path d="M2 2h12v12H2z" fill="#1f5287"/><path d="M6 6q0-2.500 2.500-2.300T10.500 6 8 9.500M8 11v1.500" fill="none" stroke="#fff" stroke-width="1.600"/>',
tstyle:'<path d="M2 12 8 2l1 10M4 9h5" fill="none" stroke="#111" stroke-width="1.800"/><path d="M15 6l-4 6-3 2 1-3 4-6z" fill="#a98b4a" stroke="#333"/>',
dstyle:'<path d="M2 13h12M14 3 7 10" stroke="#222" stroke-width="1.500"/><path d="M9 7l-6 6h7z" fill="#222"/>',
tbstyle:'<path d="M2.500 3.500h10v9h-10z" fill="#cfe0f0" stroke="#33608c"/><path d="M14 2 8 9l-2 2" stroke="#222" stroke-width="2"/><path d="M3 5h9" stroke="#33608c" stroke-width="2"/>',
dlin:'<path d="M1.500 3v10M14.500 3v10M2 8h12M5 6 2 8l3 2M11 6l3 2-3 2" '+k+' stroke-width="1.400"/>',
dali:'<path d="M2 6l4-4M10 14l4-4M4 4l8 8M4 4l1 3 2-2zM12 12l-1-3-2 2z" fill="#222" stroke="#222" stroke-width="1.300"/>',
darc:'<path d="M3 13Q4 5 12 4M1 13h4" '+k+'/><path d="M6 13q0-4 5-4M11 2l3 2-3 2z" fill="none" stroke="#2c6dac"/>',
dord:'<path d="M3 3v10h10M6 9h4V5h4" '+k+' stroke-dasharray="2 1"/><path d="M11 3v4" stroke="#2c6dac" stroke-width="2"/>',
drad:'<circle cx="8" cy="8" r="5.500" '+k+'/><path d="M8 8 5 4M4 3l4 2-3 2z" fill="#222" stroke="#222"/>',
djog:'<path d="M5 3q8-1 8 4t-6 7M5 13l5-5-4-1 6-3" '+k+' stroke-width="1.200"/>',
ddia:'<circle cx="8" cy="8" r="5.500" '+k+'/><path d="M4 4l8 8" stroke="#222" stroke-width="2"/>',
dang:'<path d="M14 12.500H2L10 4M9 4q4 3 4 8" '+k+' stroke-width="1.300"/>',
dq:'<path d="M2 2v11M14 3v10" '+k+' stroke-width="1.500"/><path d="M3 3l10 1-1 6-3-1-1 2z" fill="#e2d43a" stroke="#444"/>',
dbase:'<path d="M3.500 2v12M4 5h9M4 10h6M13 3v4M10 8v4" '+k+'/>',
dcont:'<path d="M2.500 3v10M8 3v10M13.500 3v10M3 7h10" '+k+' stroke-width="1.300"/>',
dlead:'<path d="M2 5q5-4 10 0l-2 4-5-3z" fill="#e2d43a" stroke="#444"/><path d="M8 8l4 5M3 5l5 3" '+k+' stroke-width="2"/>',
dtol:'<path d="M1.500 4.500h13v8h-13zM6 5v7M10 5v7M2 8h3M7 8h3M11 8h3" fill="#b9d5ef" stroke="#2c6dac"/>',
dcen:'<circle cx="8" cy="8" r="5.500" '+k+'/><path d="M8 6v4M6 8h4" stroke="#222" stroke-width="1.500"/>',
dedit:'<path d="M4 9l4-8 4 8M6 6h4" fill="none" stroke="#1c5494" stroke-width="1.800"/><path d="M2 10v4M14 10v4M2 12h12" '+k+' stroke-width="1.300"/>',
gear:'<path d="M2 2h12v12H2z" fill="#6d7d8b"/><circle cx="8" cy="8" r="4" fill="#dce6ee" stroke="#26394a" stroke-dasharray="2 1" stroke-width="2"/><circle cx="8" cy="8" r="1.500" fill="#26394a"/>',
wsave:'<path d="M3 5h10v9H3z" fill="#222"/><path d="M2 2h2v2M8 1v3M14 2l-2 2M2 9h2M12 9h3" stroke="#222"/>',
layers:'<path d="M2 5l6-2 6 2-6 3z" fill="#a9c8e4" stroke="#4f83b3"/><path d="M2 8l6 3 6-3M2 11l6 3 6-3" '+b+'/>',
lcur:'<path d="M2 5l7-3 5 3-6 3z" fill="#9bc0e0" stroke="#4f83b3"/><path d="M2 9h8l4 3-6 2-6-2z" fill="#e3cd3c" stroke="#7c742f"/>',
lprev:'<path d="M2 9l6-2 6 3-6 3z" fill="#9bc0e0" stroke="#3c6a94"/><path d="M12 3q-6-2-6 4M4 5l2 4 3-3" fill="none" stroke="#234a70" stroke-width="1.800"/>',
line:'<path d="M3 13 13 3" '+t+'/>',xline:'<path d="M3 13 13 3" '+k+' stroke-width="1.500"/><circle cx="3" cy="13" r="1.500"/><circle cx="13" cy="3" r="1.500"/>',
pline:'<path d="M2 11h8q4 0 4-3t-5-3" '+t+'/><path d="M9 3v4L6 5z" fill="#2d5c8c"/><circle cx="3" cy="11" r="1.500"/>',poly:'<path d="M8 3l5 4-2 6H5L3 7z" '+t+'/>',
rect:'<path d="M2.500 4.500h11v7h-11z" '+t+'/><path d="M1 10h3v3H1zM12 3h3v3h-3z" fill="#2d5c8c"/>',
arc:'<path d="M3 14Q3 5 12 3" '+t+'/><circle cx="3" cy="13" r="1.300"/><circle cx="13" cy="3" r="1.300"/>',
circle:'<circle cx="8" cy="8" r="5.500" '+t+'/><path d="M8 8l3-3M7 8h2" '+t+'/>',
cloud:'<path d="M4 7Q2 3 6 3q4-2 6 1 3 2 1 5 1 4-3 4-1 2-3 0-4 0-3-3-2-1 0-3z" '+b+' stroke-width="1.300"/>',
spline:'<path d="M2 13C5 13 4 5 7 6s3 6 5 4 1-6 3-7" '+b+' stroke-width="1.300"/>',ellipse:'<ellipse cx="8" cy="8" rx="5.500" ry="3.500" '+t+'/>',
earc:'<path d="M3 8q0-4 5-4t5.500 4-5 4l1 2M8 12l2-2" '+t+'/>',
insert:'<path d="M3 4q3-3 6 0v5H3z" fill="#bfd7a8" stroke="#3b6b3b"/><circle cx="10" cy="5" r="3" fill="none" stroke="#2d5c8c"/><path d="M7 8h6v5H7z" fill="#dcebf6" stroke="#2d5c8c"/>',
block:'<path d="M3 4h7v5H3z" fill="#d8e99c" stroke="#3b6b3b"/><circle cx="10" cy="10" r="3" fill="#eee" stroke="#2d5c8c"/>',
point:'<path d="M7 7h2v2H7z" fill="#2d5c8c"/>',
hatch:'<path d="M4 2v12M12 2v12M2 4h12M2 12h12M4 9l5-5M5 12l7-7" '+b+' stroke-width="1.300"/>',
grad:'<path d="M4 4h8v8H4z" fill="#333"/><path d="M4 2v12M12 2v12M2 4h12M2 12h12" '+k+' stroke-width="1.500"/>',
region:'<path d="M3 4h7l3 4v5H3z" fill="#dce9f5" stroke="#2d5c8c"/><circle cx="8" cy="9" r="2.500" fill="#fff" stroke="#2d5c8c"/>',
table:'<path d="M3 3h10v10H3z" fill="#c9dbf2" stroke="#3f6dab"/><path d="M3 4h10M6 4v9M10 4v9" stroke="#3f6dab"/>',
mtext:'<path d="M3.500 13.500 8 2.500l4.500 11M5 10h6" fill="none" stroke="#222" stroke-width="1.800"/>',
dist:'<path d="M2 5h12" '+t+' stroke-dasharray="3 1"/><path d="M2 9h12v4H2z" fill="#dba536" stroke="#6f5013"/>',
area:'<path d="M3 3q6 0 10 6H3z" fill="#2d6aa8"/><path d="M2 10h12v4H2z" fill="#dba536" stroke="#6f5013"/>',
mass:'<path d="M3 3l8 2 2 4H3z" fill="#5a9fc4" stroke="#2d6aa8"/><path d="M2 10h12v4H2z" fill="#dba536" stroke="#6f5013"/>',
list:'<path d="M3 2l2 3M6 3h7M7 6h5v7H5q3 0 2-7M7 9h5" '+b+' stroke-width="1.300"/>',
locate:'<path d="M3 2v11h11M4 9l5-4 3 5M9 5l3-3" '+t+'/><circle cx="9" cy="5" r="2" fill="#5b8dbb"/>',
erase:'<path d="M3 10 9 4l4-2 1 3-6 6z" fill="#f0cd6a" stroke="#695520"/><path d="M3 10l3-2 3 3-3 2z" fill="#e87f8e"/><path d="M2 14h10" stroke="#333"/>',
copyobj:'<circle cx="5" cy="5" r="2.500" '+t+'/><circle cx="10" cy="11" r="3" '+t+'/><path d="M8 4q4-1 5 3" '+t+'/>',
mirror:'<path d="M6.500 3v10H2zM9.500 3v10H14z" fill="#d3e2ef" stroke="#2d5c8c"/><path d="M8 2v12" stroke="#222"/>',
offset:'<path d="M2.500 12.500h11q0-3-3-3V5q-3-3-5 0v4q-3 0-3 3.500z" fill="#a8c6e2" stroke="#2d5c8c"/>',
array:'<path d="M2.500 2.500h4v4h-4zM9.500 2.500h4v4h-4zM2.500 9.500h4v4h-4zM9.500 9.500h4v4h-4z" '+k+' stroke-width="1.200"/>',
move:'<path d="M8 2v12M2 8h12M6 4l2-2 2 2M6 12l2 2 2-2M4 6 2 8l2 2M12 6l2 2-2 2" '+t+'/>',
rotate:'<path d="M5 4q-4 4-1 8 5 4 9-1 2-6-4-8M3 3h3v3" '+t+'/>',
scale:'<path d="M2.500 2.500h11v11h-11z" fill="#e8f0f8" stroke="#7a9cbe"/><path d="M2.500 8.500h5v5h-5z" fill="#9fc3e3" stroke="#2d5c8c"/>',
stretch:'<path d="M3.500 3v10h4V3zM8 3l5 10H8" fill="#dbe8f3" stroke="#2d5c8c"/>',
trim:'<path d="M2 8h4M9 8h5M5 13 10 3" '+b+'/>',extend:'<path d="M2 9h3M7 9h3M9 13l4-10" '+b+'/>',
brk1:'<path d="M2.500 4.500h11v8h-11z" '+t+'/><path d="M9 3h4v2H9z" fill="#456"/>',brk:'<path d="M6 3.500H2.500v9h11v-9H10" '+t+'/>',
join:'<path d="M1 8h6M9 8h6M4 5l3 3-3 3zM12 5 9 8l3 3z" fill="#222" stroke="#222"/>',
chamfer:'<path d="M3 14V8l5-5h6" '+k+'/><path d="M3 8l5-5" '+t+'/>',fillet:'<path d="M3 14V10Q3 3 10 3h4" '+t+'/>',
explode:'<path d="M3 13l3-7 2 3 5-6-3 7 2 3-4-1z" fill="#d9582c" stroke="#6e3218" stroke-dasharray="2 1"/>'
};
const draw=(n,s=14)=>`<svg width="${s}" height="${s}" viewBox="0 0 16 16" aria-hidden="true">${art[n]}</svg>`;
document.querySelectorAll('[data-art]').forEach(e=>e.innerHTML=draw(e.dataset.art,e.dataset.art==='fold'?16:e.closest('.titlebar,.menubar')?12:14));
document.querySelectorAll('[data-icons]').forEach(e=>{
  e.classList.add('align-items-center');
  e.innerHTML=e.dataset.icons.split(' ').map(n=>n==='|'?'<span class="bar-sep"></span>':
    n[0]==='-'?`<button class="ic slim" aria-label="${n.slice(1)}">${draw(n.slice(1),12)}</button>`:
    `<button class="ic" aria-label="${n}">${draw(n)}</button>`).join('');
});
</script>
<script src="https://cdn.jsdelivr.net/npm/bootstrap@5.3.0/dist/js/bootstrap.bundle.min.js"></script>
</body>
</html>
